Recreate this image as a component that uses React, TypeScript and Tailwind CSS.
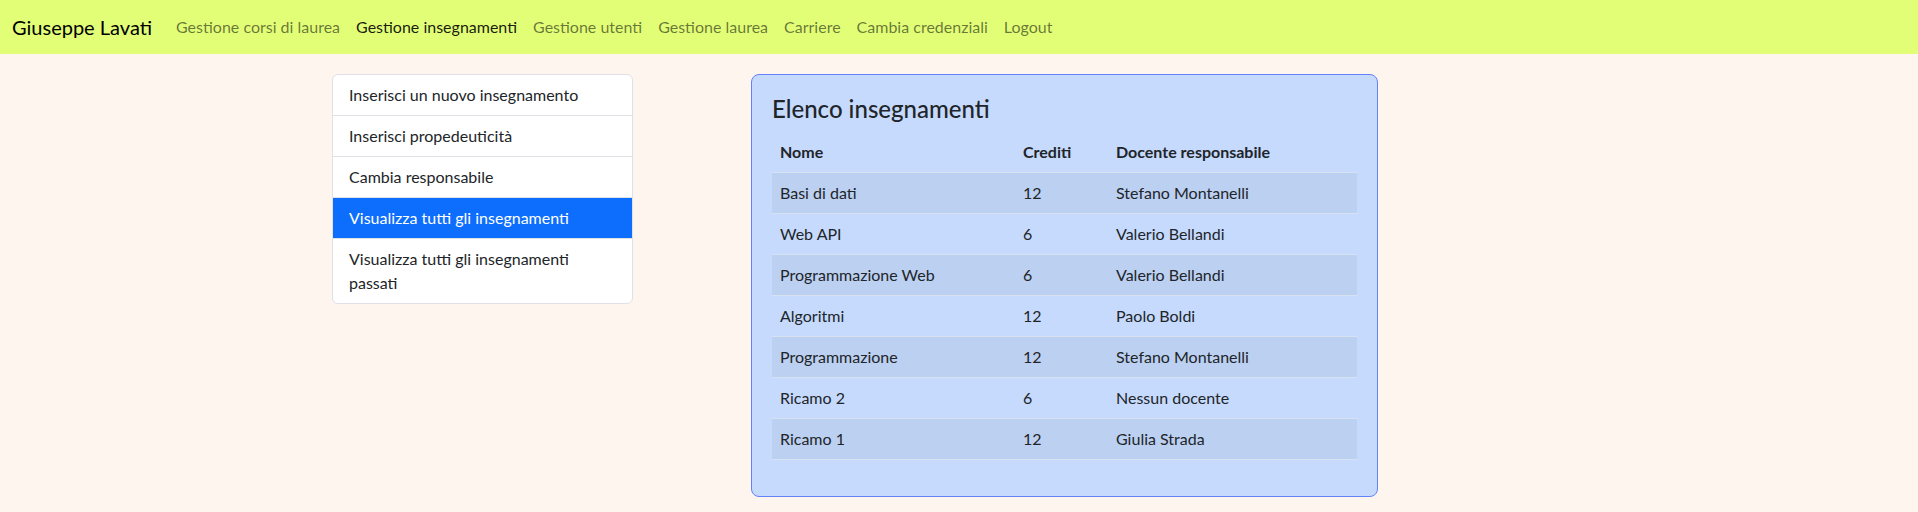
import React from 'react'

const navLinks = [
    { label: 'Gestione corsi di laurea', active: false },
    { label: 'Gestione insegnamenti', active: true },
    { label: 'Gestione utenti', active: false },
    { label: 'Gestione laurea', active: false },
    { label: 'Carriere', active: false },
    { label: 'Cambia credenziali', active: false },
    { label: 'Logout', active: false },
]

const menu = [
    { label: 'Inserisci un nuovo insegnamento', active: false },
    { label: 'Inserisci propedeuticità', active: false },
    { label: 'Cambia responsabile', active: false },
    { label: 'Visualizza tutti gli insegnamenti', active: true },
    { label: 'Visualizza tutti gli insegnamenti passati', active: false },
]

const insegnamenti = [
    { nome: 'Basi di dati', crediti: 12, docente: 'Stefano Montanelli' },
    { nome: 'Web API', crediti: 6, docente: 'Valerio Bellandi' },
    { nome: 'Programmazione Web', crediti: 6, docente: 'Valerio Bellandi' },
    { nome: 'Algoritmi', crediti: 12, docente: 'Paolo Boldi' },
    { nome: 'Programmazione', crediti: 12, docente: 'Stefano Montanelli' },
    { nome: 'Ricamo 2', crediti: 6, docente: 'Nessun docente' },
    { nome: 'Ricamo 1', crediti: 12, docente: 'Giulia Strada' },
]

const Navbar = () => (
    <nav className="flex h-[54px] items-center bg-[#e2fe77] px-3">
        <span className="mr-4 text-[20px] leading-[30px] text-black">Giuseppe Lavati</span>
        <ul className="flex items-center">
            {navLinks.map(link => (
                <li key={link.label}>
                    <a className={`block px-2 py-2 text-[16px] leading-6 ${link.active ? 'text-black/90' : 'text-black/55'}`}>
                        {link.label}
                    </a>
                </li>
            ))}
        </ul>
    </nav>
)

const Sidebar = () => (
    <div className="w-[301px] overflow-hidden rounded-md border border-[#dee2e6] bg-white">
        {menu.map((item, i) => (
            <div
                key={item.label}
                className={`px-4 py-2 text-[16px] leading-6 ${i > 0 ? 'border-t border-[#dee2e6]' : ''} ${item.active ? 'border-[#0d6efd] bg-[#0d6efd] text-white' : 'text-[#212529]'}`}
            >
                {item.label}
            </div>
        ))}
    </div>
)

const Elenco = () => (
    <div className="w-[627px] rounded-lg border border-[#6482f7] bg-[#c6dafe] p-5">
        <h4 className="mb-2 text-[24px] font-medium leading-[1.2] text-[#212529]">Elenco insegnamenti</h4>
        <table className="mb-4 w-full table-fixed border-collapse text-[16px] leading-6 text-[#212529]">
            <thead>
                <tr className="border-b border-[#d8e1ef]">
                    <th className="w-[243px] p-2 text-left font-bold">Nome</th>
                    <th className="w-[93px] p-2 text-left font-bold">Crediti</th>
                    <th className="p-2 text-left font-bold">Docente responsabile</th>
                </tr>
            </thead>
            <tbody>
                {insegnamenti.map((ins, i) => (
                    <tr key={ins.nome} className={`border-b border-[#d8e1ef] ${i % 2 === 0 ? 'bg-[#bcd0f2]' : ''}`}>
                        <td className="p-2">{ins.nome}</td>
                        <td className="p-2">{ins.crediti}</td>
                        <td className="p-2">{ins.docente}</td>
                    </tr>
                ))}
            </tbody>
        </table>
    </div>
)

export default function App() {
    return (
        <div className="min-h-[512px] bg-[#fff5ef] font-['Lato',sans-serif]">
            <Navbar />
            <div className="flex items-start gap-[118px] pl-[332px] pt-5">
                <Sidebar />
                <Elenco />
            </div>
        </div>
    )
}
